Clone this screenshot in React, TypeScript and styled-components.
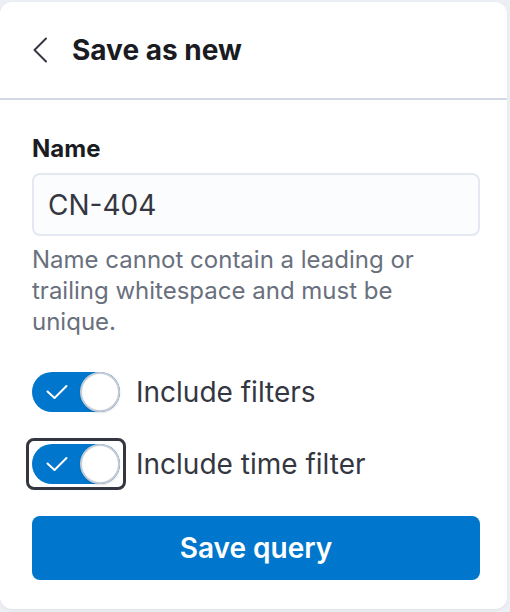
import React from "react";
import styled, { createGlobalStyle } from "styled-components";

const Global = createGlobalStyle`
  html, body {
    margin: 0;
    padding: 0;
    background: #eceff4;
    font-family: Inter, "Noto Sans", sans-serif;
  }
  * { box-sizing: border-box; }
`;

const Panel = styled.div`
  margin: 2px 3px 3px 0;
  background: #ffffff;
  border-radius: 12px;
  box-shadow: 0 1px 3px rgba(0, 0, 0, 0.06);
  overflow: hidden;
`;

const Header = styled.div`
  height: 98px;
  display: flex;
  align-items: center;
  gap: 24px;
  padding-left: 33px;
  border-bottom: 2px solid #d3dae6;
`;

const BackButton = styled.button`
  border: 0;
  background: transparent;
  padding: 0;
  width: 15px;
  height: 26px;
  display: flex;
  align-items: center;
  justify-content: center;
  cursor: pointer;
`;

const Title = styled.h2`
  margin: 0;
  font-size: 28px;
  font-weight: 700;
  color: #1a1c21;
`;

const Body = styled.div`
  padding: 31px 27px 29px 32px;
  display: flex;
  flex-direction: column;
`;

const Label = styled.label`
  font-size: 24px;
  line-height: 36px;
  font-weight: 700;
  color: #1a1c21;
  margin-bottom: 6px;
`;

const Input = styled.input`
  height: 63px;
  width: 100%;
  border: 2px solid #e3e8f1;
  border-radius: 8px;
  background: #fbfcfd;
  padding: 0 14px;
  font-family: inherit;
  font-size: 28px;
  color: #343741;
  outline: none;
`;

const Help = styled.div`
  margin-top: 8px;
  font-size: 24px;
  line-height: 31px;
  color: #69707d;
  padding-right: 60px;
`;

const SwitchGroup = styled.div`
  margin-top: 35px;
  display: flex;
  flex-direction: column;
  gap: 32px;
`;

const SwitchRow = styled.div`
  display: flex;
  align-items: center;
  gap: 16px;
  height: 40px;
`;

const FocusFrame = styled.span<{ $focused?: boolean }>`
  display: inline-flex;
  padding: 3px;
  margin: -6px;
  border-radius: 8px;
  border: 3px solid ${(p) => (p.$focused ? "#343741" : "transparent")};
`;

const Track = styled.button`
  position: relative;
  width: 88px;
  height: 40px;
  border: 0;
  padding: 0;
  border-radius: 20px;
  background: #0077cc;
  cursor: pointer;
  flex-shrink: 0;
  outline: none;
`;

const Thumb = styled.span`
  position: absolute;
  top: 0;
  right: 0;
  width: 40px;
  height: 40px;
  border-radius: 50%;
  background: #ffffff;
  border: 2px solid #c6ccd6;
  box-shadow: 0 1px 2px rgba(0, 0, 0, 0.12);
`;

const CheckIcon = styled.svg`
  position: absolute;
  left: 14px;
  top: 12px;
`;

const SwitchLabel = styled.span`
  font-size: 28px;
  line-height: 40px;
  color: #343741;
`;

const PrimaryButton = styled.button`
  margin-top: 32px;
  height: 64px;
  width: 100%;
  border: 0;
  border-radius: 8px;
  background: #0077cc;
  color: #ffffff;
  font-family: inherit;
  font-size: 28px;
  font-weight: 600;
  cursor: pointer;
`;

const Toggle: React.FC<{ label: string; focused?: boolean }> = ({ label, focused }) => (
  <SwitchRow>
    <FocusFrame $focused={focused}>
      <Track role="switch" aria-checked="true">
        <CheckIcon width="22" height="16" viewBox="0 0 22 16">
          <polyline
            points="1.5,7.5 8.5,14 20.5,2"
            fill="none"
            stroke="#ffffff"
            strokeWidth="2"
            strokeLinecap="round"
            strokeLinejoin="round"
          />
        </CheckIcon>
        <Thumb />
      </Track>
    </FocusFrame>
    <SwitchLabel>{label}</SwitchLabel>
  </SwitchRow>
);

export default function App() {
  return (
    <>
      <Global />
      <Panel>
        <Header>
          <BackButton aria-label="Back">
            <svg width="15" height="26" viewBox="0 0 15 26">
              <polyline
                points="13,1.5 1.5,13 13,24.5"
                fill="none"
                stroke="#343741"
                strokeWidth="2"
                strokeLinecap="round"
                strokeLinejoin="round"
              />
            </svg>
          </BackButton>
          <Title>Save as new</Title>
        </Header>
        <Body>
          <Label>Name</Label>
          <Input defaultValue="CN-404" />
          <Help>
            Name cannot contain a leading or trailing whitespace and must be unique.
          </Help>
          <SwitchGroup>
            <Toggle label="Include filters" />
            <Toggle label="Include time filter" focused />
          </SwitchGroup>
          <PrimaryButton>Save query</PrimaryButton>
        </Body>
      </Panel>
    </>
  );
}
